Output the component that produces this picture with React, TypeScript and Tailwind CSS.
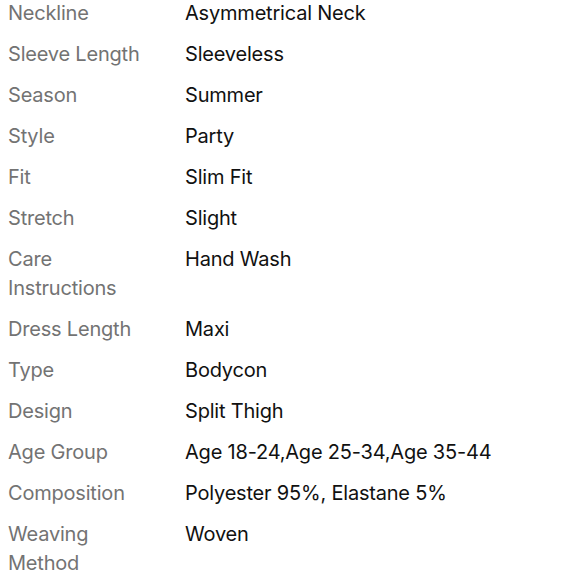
const rows: [string, string][] = [
  ['Neckline', 'Asymmetrical Neck'],
  ['Sleeve Length', 'Sleeveless'],
  ['Season', 'Summer'],
  ['Style', 'Party'],
  ['Fit', 'Slim Fit'],
  ['Stretch', 'Slight'],
  ['Care Instructions', 'Hand Wash'],
  ['Dress Length', 'Maxi'],
  ['Type', 'Bodycon'],
  ['Design', 'Split Thigh'],
  ['Age Group', 'Age 18-24,Age 25-34,Age 35-44'],
  ['Composition', 'Polyester 95%, Elastane 5%'],
  ['Weaving Method', 'Woven'],
]

export default function App() {
  return (
    <div className="min-h-screen bg-white font-['Inter',sans-serif] text-[20px] leading-[29px] tracking-[-0.01em]">
      <div className="flex flex-col gap-3 -mt-[1px] pl-2 pr-4">
        {rows.map(([label, value]) => (
          <div key={label} className="flex">
            <div className="w-[177px] shrink-0 pr-[25px] text-[#737373]">{label}</div>
            <div className="text-[#111]">{value}</div>
          </div>
        ))}
      </div>
    </div>
  )
}
